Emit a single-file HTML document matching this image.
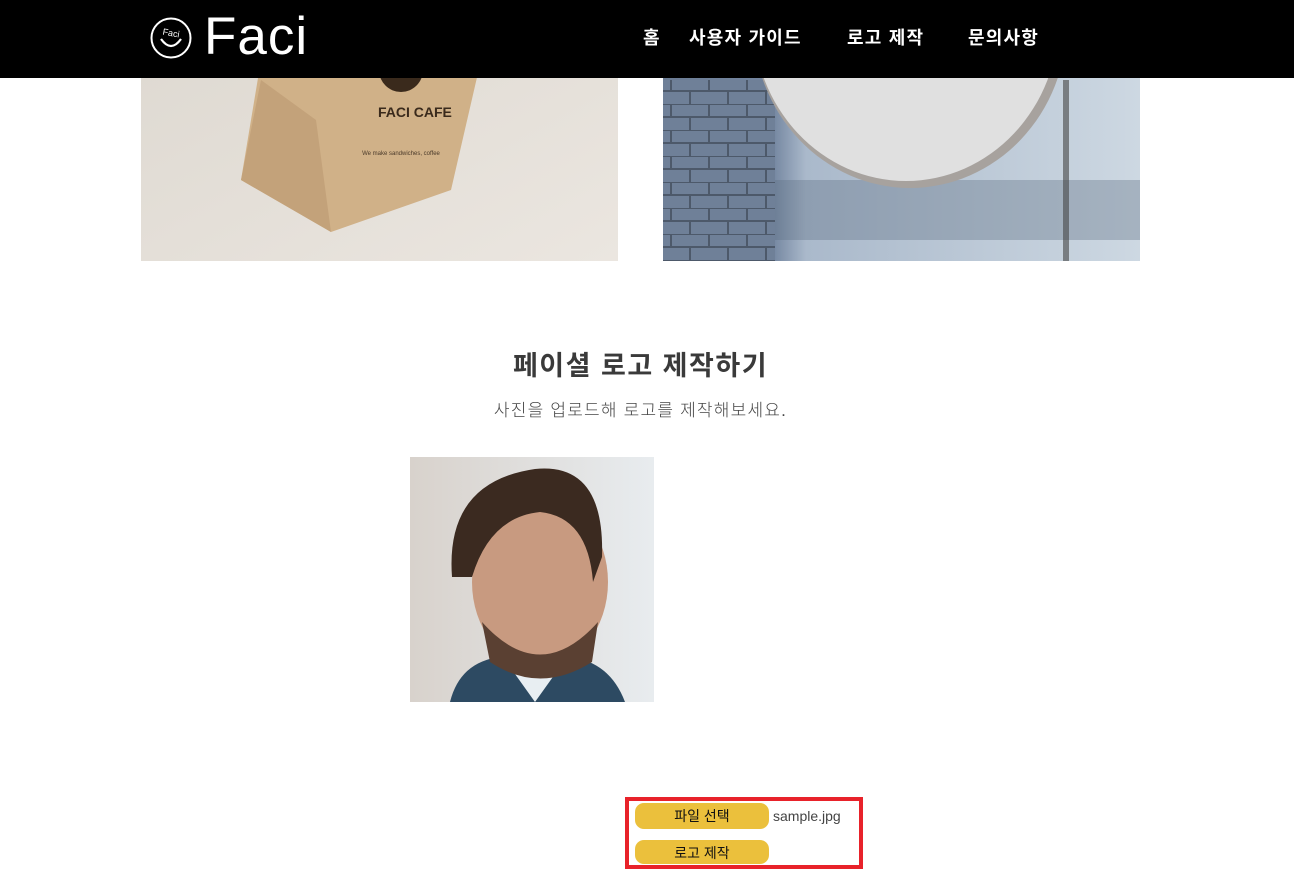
<!DOCTYPE html>
<html lang="ko"><head><meta charset="utf-8"><style>
*{margin:0;padding:0;box-sizing:border-box}
body{width:1294px;height:875px;overflow:hidden;background:#fff;font-family:"Liberation Sans","Noto Sans CJK KR",sans-serif;position:relative}
.hdr{position:absolute;left:0;top:0;width:1294px;height:78px;background:#000;z-index:5}
.nav a{position:absolute;top:24px;color:#fff;font-weight:bold;font-size:18px;letter-spacing:1.2px;text-decoration:none}
.abs{position:absolute}
h2{position:absolute;left:0;width:1281px;text-align:center;top:344px;font-size:27px;letter-spacing:1.5px;color:#3a3a3a;font-weight:bold}
.sub{position:absolute;left:0;width:1281px;text-align:center;top:396px;font-size:17px;letter-spacing:1.2px;color:#444;font-weight:300}
.box{position:absolute;left:625px;top:797px;width:238px;height:72px;border:4px solid #e8222a}
.btn{position:absolute;left:635px;width:134px;background:#ebc03c;border-radius:9px;text-align:center;font-size:14px;color:#111}
</style></head><body>
<div class="hdr">
<svg class="abs" style="left:149px;top:16px" width="44" height="44" viewBox="0 0 44 44"><circle cx="22" cy="22" r="19.5" fill="none" stroke="#fff" stroke-width="2"/><path d="M12 23 Q22 37 32 23" fill="none" stroke="#fff" stroke-width="2.2"/><text x="22" y="20" fill="#fff" font-size="9" text-anchor="middle" font-family="Liberation Sans" transform="rotate(10 22 18)">Faci</text></svg>
<div class="abs" style="left:204px;top:6px;color:#fff;font-size:53px;font-family:'Liberation Sans',sans-serif;letter-spacing:1px">Faci</div>
<div class="nav"><a style="left:643px">홈</a><a style="left:689px">사용자 가이드</a><a style="left:847px">로고 제작</a><a style="left:968px">문의사항</a></div>
</div>
<svg class="abs" style="left:141px;top:0" width="477" height="261"><defs><linearGradient id="g1" x1="0" y1="0" x2="1" y2="1"><stop offset="0" stop-color="#ddd8d0"/><stop offset="1" stop-color="#ebe6e0"/></linearGradient></defs><rect width="477" height="261" fill="url(#g1)"/><polygon points="120,60 340,60 310,190 190,232 100,180" fill="#d0b188"/><polygon points="100,180 120,80 175,120 190,232" fill="#c3a27a"/><circle cx="260" cy="70" r="22" fill="#3a2a1c"/><text x="237" y="117" font-size="14" font-weight="bold" fill="#3a2a1c">FACI CAFE</text><text x="260" y="155" font-size="6" fill="#4a3a2a" text-anchor="middle">We make sandwiches, coffee</text></svg>
<svg class="abs" style="left:663px;top:0" width="477" height="261"><defs><linearGradient id="g2" x1="0" y1="0" x2="1" y2="0"><stop offset="0" stop-color="#6a7b93"/><stop offset=".23" stop-color="#7486a0"/><stop offset=".3" stop-color="#aab9cb"/><stop offset="1" stop-color="#cdd8e2"/></linearGradient><pattern id="br" width="38" height="26" patternUnits="userSpaceOnUse"><rect width="38" height="26" fill="#6f8098"/><path d="M0 0H38M0 13H38M8 0V13M27 13V26" stroke="#4d596a" stroke-width="2"/></pattern></defs><rect width="477" height="261" fill="url(#g2)"/><rect x="0" y="80" width="112" height="181" fill="url(#br)"/><rect x="112" y="180" width="365" height="60" fill="#5d6d80" opacity=".35"/><rect x="400" y="80" width="6" height="181" fill="#444" opacity=".6"/><ellipse cx="247" cy="22" rx="157" ry="166" fill="#a7a29e"/><ellipse cx="243" cy="18" rx="153" ry="163" fill="#e0e0e0"/></svg>
<h2>페이셜 로고 제작하기</h2>
<div class="sub">사진을 업로드해 로고를 제작해보세요.</div>
<svg class="abs" style="left:410px;top:457px" width="244" height="245"><defs><linearGradient id="g3" x1="0" y1="0" x2="1" y2="0"><stop offset="0" stop-color="#d8d2cc"/><stop offset="1" stop-color="#e8ecef"/></linearGradient></defs><rect width="244" height="245" fill="url(#g3)"/><path d="M40 245 Q50 205 90 200 L160 200 Q200 205 215 245Z" fill="#2d4a62"/><path d="M100 210 L125 245 L150 210Z" fill="#e8eef2"/><ellipse cx="130" cy="125" rx="68" ry="85" fill="#c89a80"/><path d="M42 120 Q35 25 125 12 Q195 5 192 100 L183 125 Q178 60 130 55 Q80 60 62 120Z" fill="#3b2a20"/><path d="M72 165 Q130 230 188 165 L182 205 Q130 238 80 205Z" fill="#5a4032"/></svg>
<div class="box"></div>
<div class="btn" style="top:803px;height:26px;line-height:26px">파일 선택</div>
<div class="abs" style="left:773px;top:808px;font-size:14px;color:#444">sample.jpg</div>
<div class="btn" style="top:840px;height:24px;line-height:26px">로고 제작</div>
</body></html>
